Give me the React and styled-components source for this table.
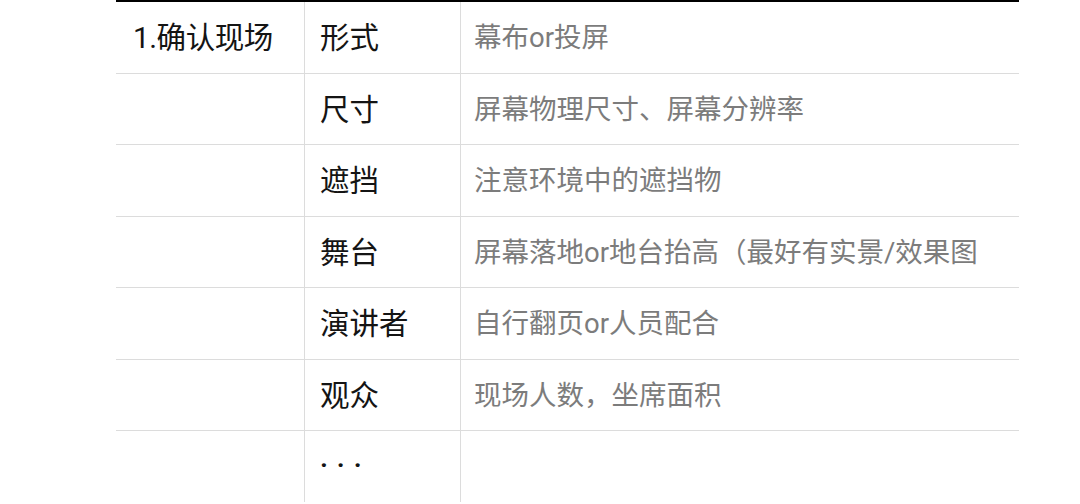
import React from 'react'
import styled, { createGlobalStyle } from 'styled-components'

const GlobalStyle = createGlobalStyle`
  html, body {
    margin: 0;
    padding: 0;
    background: #ffffff;
  }
  body {
    font-family: Roboto, "Noto Sans CJK SC", sans-serif;
    -webkit-font-smoothing: antialiased;
    text-spacing-trim: space-all;
  }
`

const Page = styled.div`
  width: 1080px;
  height: 504px;
  overflow: hidden;
  background: #fff;
`

const Table = styled.div`
  margin-left: 116px;
  width: 903px;
  height: 500px;
  border-top: 2.5px solid #000;
  display: grid;
  grid-template-columns: 189px 156px 1fr;
  grid-template-rows: repeat(6, 71.5px) 1fr;
`

const Cell = styled.div`
  box-sizing: border-box;
  display: flex;
  align-items: center;
  padding-left: ${({ $pad }) => $pad}px;
  padding-bottom: 4px;
  border-bottom: ${({ $last }) => ($last ? 'none' : '1.5px solid #dcdcdc')};
  border-right: ${({ $divider }) => ($divider ? '1.5px solid #dcdcdc' : 'none')};
  white-space: nowrap;
  overflow: hidden;
`

const StepText = styled.span`
  font-size: 29.5px;
  color: #141414;
  letter-spacing: -0.4px;
`

const ItemText = styled.span`
  font-size: 29.5px;
  color: #141414;
`

const NoteText = styled.span`
  font-size: 27.5px;
  color: #7c7c7c;
  text-spacing-trim: space-all;
`

const More = styled.span`
  font-size: 26px;
  color: #141414;
  letter-spacing: 9px;
  font-weight: 700;
`

const rows = [
  { step: '1.确认现场', item: '形式', note: '幕布or投屏' },
  { item: '尺寸', note: '屏幕物理尺寸、屏幕分辨率' },
  { item: '遮挡', note: '注意环境中的遮挡物' },
  { item: '舞台', note: '屏幕落地or地台抬高（最好有实景/效果图' },
  { item: '演讲者', note: '自行翻页or人员配合' },
  { item: '观众', note: '现场人数，坐席面积' },
  { item: null, note: '' },
]

const App = () => (
  <>
    <GlobalStyle />
    <Page>
      <Table>
        {rows.map((row, i) => {
          const last = i === rows.length - 1
          return (
            <React.Fragment key={i}>
              <Cell $pad={17} $divider $last={last}>
                {row.step && <StepText>{row.step}</StepText>}
              </Cell>
              <Cell $pad={15} $divider $last={last}>
                {row.item ? <ItemText>{row.item}</ItemText> : <More>···</More>}
              </Cell>
              <Cell $pad={13} $last={last}>
                <NoteText>{row.note}</NoteText>
              </Cell>
            </React.Fragment>
          )
        })}
      </Table>
    </Page>
  </>
)

export default App
